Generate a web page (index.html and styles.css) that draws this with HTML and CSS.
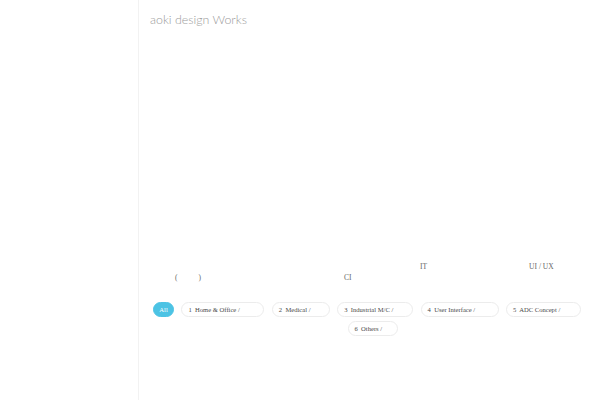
FILE: index.html
```html
<!DOCTYPE html>
<html lang="ja">
<head>
<meta charset="utf-8">
<title>aoki design Works</title>
<link rel="stylesheet" href="styles.css">
</head>
<body>
<div class="page">
  <aside class="sidebar"></aside>
  <main class="main">
    <h1 class="title">aoki design Works</h1>
    <div class="hero"></div>
    <div class="intro">
      <div class="line"><span class="gap" style="width:270px"></span><span>IT</span><span class="gap" style="width:102px"></span><span>UI / UX</span></div>
      <div class="line"><span class="gap" style="width:25px"></span><span>(</span><span class="gap" style="width:21px"></span><span>)</span><span class="gap" style="width:143px"></span><span>CI</span></div>
    </div>
    <nav class="filters">
      <span class="pill active">All</span>
      <span class="pill w1">1&nbsp; Home &amp; Office /</span>
      <span class="pill w2">2&nbsp; Medical /</span>
      <span class="pill w3">3&nbsp; Industrial M/C /</span>
      <span class="pill w4">4&nbsp; User Interface /</span>
      <span class="pill w5">5&nbsp; ADC Concept /</span>
      <span class="pill w6">6&nbsp; Others /</span>
    </nav>
  </main>
</div>
</body>
</html>
```
FILE: styles.css
```css
html, body {
  margin: 0;
  padding: 0;
  background: #ffffff;
}
.page {
  display: flex;
  width: 600px;
  height: 400px;
  overflow: hidden;
}
.sidebar {
  width: 138px;
  flex: none;
  border-right: 1px solid #f2f2f2;
  background: #ffffff;
}
.main {
  flex: 1;
  display: flex;
  flex-direction: column;
  padding: 11px 16px 0 11px;
}
.title {
  margin: 0;
  font-family: "Lato", "Open Sans", sans-serif;
  font-weight: 300;
  font-size: 12.4px;
  line-height: 18px;
  color: #9a9a9a;
}
.hero {
  height: 232px;
}
.intro {
  font-family: "Liberation Serif", serif;
  font-size: 7.5px;
  line-height: 11px;
  color: #666;
}
.line {
  display: flex;
  white-space: nowrap;
}
.gap {
  display: inline-block;
}
.filters {
  margin-top: 19px;
  display: flex;
  flex-wrap: wrap;
  justify-content: center;
  gap: 4px 7.4px;
  font-family: "Liberation Serif", serif;
  font-size: 6.6px;
  color: #4a4a4a;
}
.pill {
  box-sizing: border-box;
  height: 15px;
  line-height: 13px;
  padding: 0 6px;
  border: 1px solid #ececec;
  border-radius: 8px;
  white-space: nowrap;
}
.pill.active {
  width: 21px;
  padding: 0;
  text-align: center;
  background: #4cc3e4;
  border-color: #4cc3e4;
  color: #fff;
}
.w1 { width: 83px; }
.w2 { width: 58px; }
.w3 { width: 76px; }
.w4 { width: 78px; }
.w5 { width: 75px; }
.w6 { width: 50px; margin-left: 11px; }
```
